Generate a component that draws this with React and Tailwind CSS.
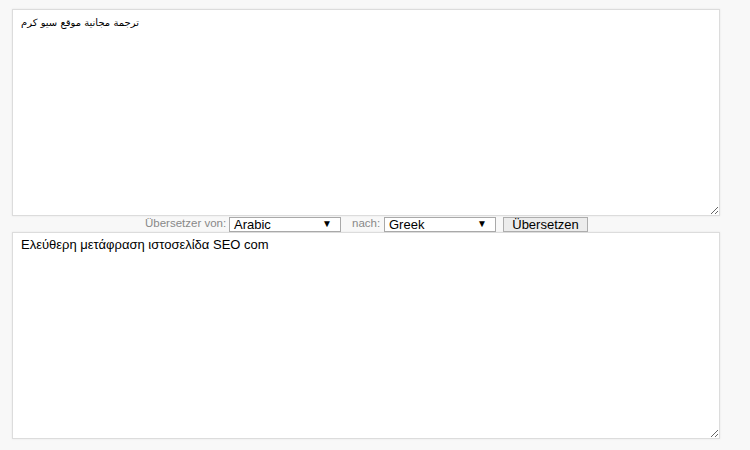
export default function App() {
  return (
    <div
      className="w-[750px] h-[450px] bg-[#f8f8f8] pt-[9px] pl-[12px]"
      style={{ fontFamily: '"Liberation Sans", Arial, sans-serif' }}
    >
      <textarea
        readOnly
        dir="ltr"
        className="block w-[708px] h-[207px] bg-white border border-[#dcdcdc] shadow-[0_0_2px_rgba(0,0,0,0.08)] px-[8px] py-[5px] text-[10px] leading-[16px] text-black outline-none resize"
        defaultValue="ترجمة مجانية موقع سيو كرم"
        style={{ fontFamily: '"DejaVu Sans", "Liberation Sans", sans-serif' }}
      />
      <div className="flex items-center h-[16px] pl-[133px] text-[11.5px] text-[#888]">
        <span className="w-[81px] mr-[3px] whitespace-nowrap">Übersetzer von:</span>
        <div className="flex items-center justify-between w-[112px] h-[15px] bg-white border border-[#a9a9a9] pl-[4px] pr-[8px] text-[13px] text-black leading-none">
          <span>Arabic</span>
          <span className="text-[10px]">▼</span>
        </div>
        <span className="ml-[11px] w-[29px] mr-[3px]">nach:</span>
        <div className="flex items-center justify-between w-[112px] h-[15px] bg-white border border-[#a9a9a9] pl-[4px] pr-[8px] text-[13px] text-black leading-none">
          <span>Greek</span>
          <span className="text-[10px]">▼</span>
        </div>
        <div className="ml-[7px] w-[85px] h-[15px] flex items-center justify-center bg-[#ececec] border border-[#adadad] text-[13px] text-black leading-none">
          Übersetzen
        </div>
      </div>
      <textarea
        readOnly
        className="block w-[708px] h-[207px] bg-white border border-[#dcdcdc] shadow-[0_0_2px_rgba(0,0,0,0.08)] px-[8px] py-[4px] text-[13px] leading-[16px] text-black outline-none resize"
        defaultValue="Ελεύθερη μετάφραση ιστοσελίδα SEO com"
        style={{ fontFamily: '"Liberation Sans", Arial, sans-serif' }}
      />
    </div>
  );
}
